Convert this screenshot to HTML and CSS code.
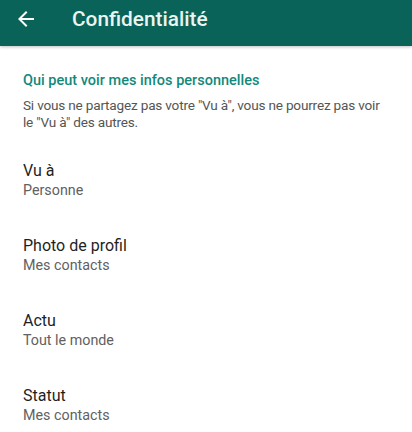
FILE: index.html
```html
<!DOCTYPE html>
<html lang="fr">
<head>
<meta charset="utf-8">
<link rel="stylesheet" href="styles.css">
</head>
<body>
<header class="bar">
  <svg class="back" width="24" height="24" viewBox="0 0 24 24"><path d="M20 11H7.83l5.59-5.59L12 4l-8 8 8 8 1.41-1.41L7.83 13H20v-2z" fill="#fff"/></svg>
  <h1 class="title">Confidentialité</h1>
</header>
<main class="content">
  <section class="intro">
    <h2 class="section-title">Qui peut voir mes infos personnelles</h2>
    <p class="desc">Si vous ne partagez pas votre "Vu à", vous ne pourrez pas voir le "Vu à" des autres.</p>
  </section>
  <ul class="list">
    <li class="item"><div class="item-title">Vu à</div><div class="item-sub">Personne</div></li>
    <li class="item"><div class="item-title">Photo de profil</div><div class="item-sub">Mes contacts</div></li>
    <li class="item"><div class="item-title">Actu</div><div class="item-sub">Tout le monde</div></li>
    <li class="item"><div class="item-title">Statut</div><div class="item-sub">Mes contacts</div></li>
  </ul>
</main>
</body>
</html>
```
FILE: styles.css
```css
* { box-sizing: border-box; }
html, body { margin: 0; padding: 0; background: #fff; }
body { font-family: Roboto, "Liberation Sans", sans-serif; width: 412px; height: 432px; overflow: hidden; }
.bar {
  height: 46px;
  background: #0a6358;
  display: flex;
  align-items: center;
  padding-left: 14px;
  box-shadow: 0 1px 3px rgba(0,0,0,0.25);
  position: relative;
}
.back { width: 24px; height: 24px; margin-top: -8px; }
.title {
  margin: -8px 0 0 34px;
  color: #e9f5f2;
  font-size: 20.8px;
  font-weight: 500;
}
.content { padding: 0 23px; }
.intro { padding-top: 26px; }
.section-title {
  margin: 0;
  color: #13897b;
  font-size: 14.5px;
  font-weight: 500;
  line-height: 18px;
}
.desc {
  margin: 7px 0 0;
  color: #555;
  font-size: 13.6px;
  letter-spacing: -0.2px;
  line-height: 17px;
}
.list {
  list-style: none;
  margin: 0;
  padding: 30px 0 0;
  display: flex;
  flex-direction: column;
  gap: 37px;
}
.item { display: flex; flex-direction: column; }
.item-title { color: #1f1f1f; font-size: 16px; line-height: 20px; }
.item-sub { color: #616161; font-size: 14.3px; line-height: 18px; }
```
